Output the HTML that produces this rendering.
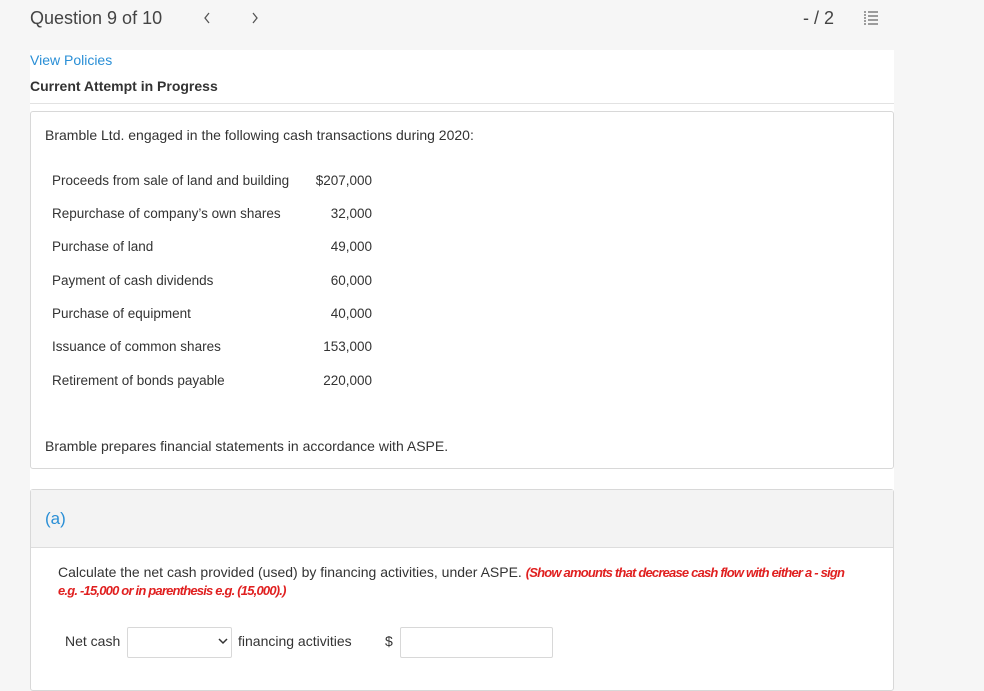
<!DOCTYPE html>
<html><head><style>
body{margin:0;width:984px;height:671px;background:#f6f6f6;font-family:"Liberation Sans",sans-serif;color:#333;overflow:hidden;position:relative}
.a{position:absolute;white-space:nowrap}
.panel{position:absolute;left:30px;top:50px;width:864px;height:621px;background:#fff}
.box{position:absolute;border:1px solid #d8d8d8;border-radius:3px;background:#fff}
.t{font-size:13.5px;color:#333}
.r{text-align:right;width:80px}
</style></head><body>
<div class="a" style="left:30px;top:8px;font-size:18px;color:#444">Question 9 of 10</div>
<svg class="a" style="left:203px;top:12px" width="8" height="12"><path d="M6 1L2 6l4 5" stroke="#555" stroke-width="1.3" fill="none"/></svg>
<svg class="a" style="left:251px;top:12px" width="8" height="12"><path d="M2 1l4 5-4 5" stroke="#555" stroke-width="1.3" fill="none"/></svg>
<div class="a" style="left:803px;top:8px;font-size:18px;color:#444">- / 2</div>
<svg class="a" style="left:863px;top:10px" width="16" height="16" viewBox="0 0 16 16" stroke="#666" stroke-width="1.2"><path d="M1 2h2M1 5h2M1 8h2M1 11h2M1 14h2M5 2h10M5 6h10M5 10h10M5 14h10"/></svg>
<div class="panel"></div>
<div class="a" style="left:30px;top:52px;font-size:14px;color:#2a8fd6">View Policies</div>
<div class="a" style="left:30px;top:78px;font-size:14px;font-weight:bold;color:#333">Current Attempt in Progress</div>
<div class="a" style="left:30px;top:103px;width:864px;height:1px;background:#e2e2e2"></div>
<div class="box" style="left:30px;top:111px;width:862px;height:356px"></div>
<div class="a t" style="left:45px;top:127px;font-size:14px">Bramble Ltd. engaged in the following cash transactions during 2020:</div>
<div class="a t" style="left:52px;top:173px">Proceeds from sale of land and building</div><div class="a t r" style="left:292px;top:173px">$207,000</div>
<div class="a t" style="left:52px;top:206px">Repurchase of company’s own shares</div><div class="a t r" style="left:292px;top:206px">32,000</div>
<div class="a t" style="left:52px;top:239px">Purchase of land</div><div class="a t r" style="left:292px;top:239px">49,000</div>
<div class="a t" style="left:52px;top:273px">Payment of cash dividends</div><div class="a t r" style="left:292px;top:273px">60,000</div>
<div class="a t" style="left:52px;top:306px">Purchase of equipment</div><div class="a t r" style="left:292px;top:306px">40,000</div>
<div class="a t" style="left:52px;top:339px">Issuance of common shares</div><div class="a t r" style="left:292px;top:339px">153,000</div>
<div class="a t" style="left:52px;top:373px">Retirement of bonds payable</div><div class="a t r" style="left:292px;top:373px">220,000</div>
<div class="a t" style="left:45px;top:438px;font-size:14px">Bramble prepares financial statements in accordance with ASPE.</div>
<div class="box" style="left:30px;top:489px;width:862px;height:200px"></div>
<div class="a" style="left:31px;top:490px;width:862px;height:57px;background:#f3f3f3;border-bottom:1px solid #ddd"></div>
<div class="a" style="left:45px;top:509px;font-size:17px;color:#2a8fd6">(a)</div>
<div class="a t" style="left:58px;top:564px;font-size:14px">Calculate the net cash provided (used) by financing activities, under ASPE. <b style="color:#e02020;font-style:italic;letter-spacing:-0.8px;font-size:13px">(Show amounts that decrease cash flow with either a - sign</b></div>
<div class="a" style="left:58px;top:583px;font-size:13px;color:#e02020;font-style:italic;font-weight:bold;letter-spacing:-0.8px">e.g. -15,000 or in parenthesis e.g. (15,000).)</div>
<div class="a t" style="left:65px;top:633px;font-size:14px">Net cash</div>
<div class="box" style="left:127px;top:627px;width:103px;height:29px;border-radius:2px"></div>
<svg class="a" style="left:218px;top:637px" width="10" height="8"><path d="M1 2l4 4 4-4" stroke="#333" stroke-width="1.5" fill="none"/></svg>
<div class="a t" style="left:238px;top:633px;font-size:14px">financing activities</div>
<div class="a t" style="left:385px;top:633px;font-size:14px">$</div>
<div class="box" style="left:400px;top:627px;width:151px;height:29px;border-radius:2px"></div>
</body></html>
